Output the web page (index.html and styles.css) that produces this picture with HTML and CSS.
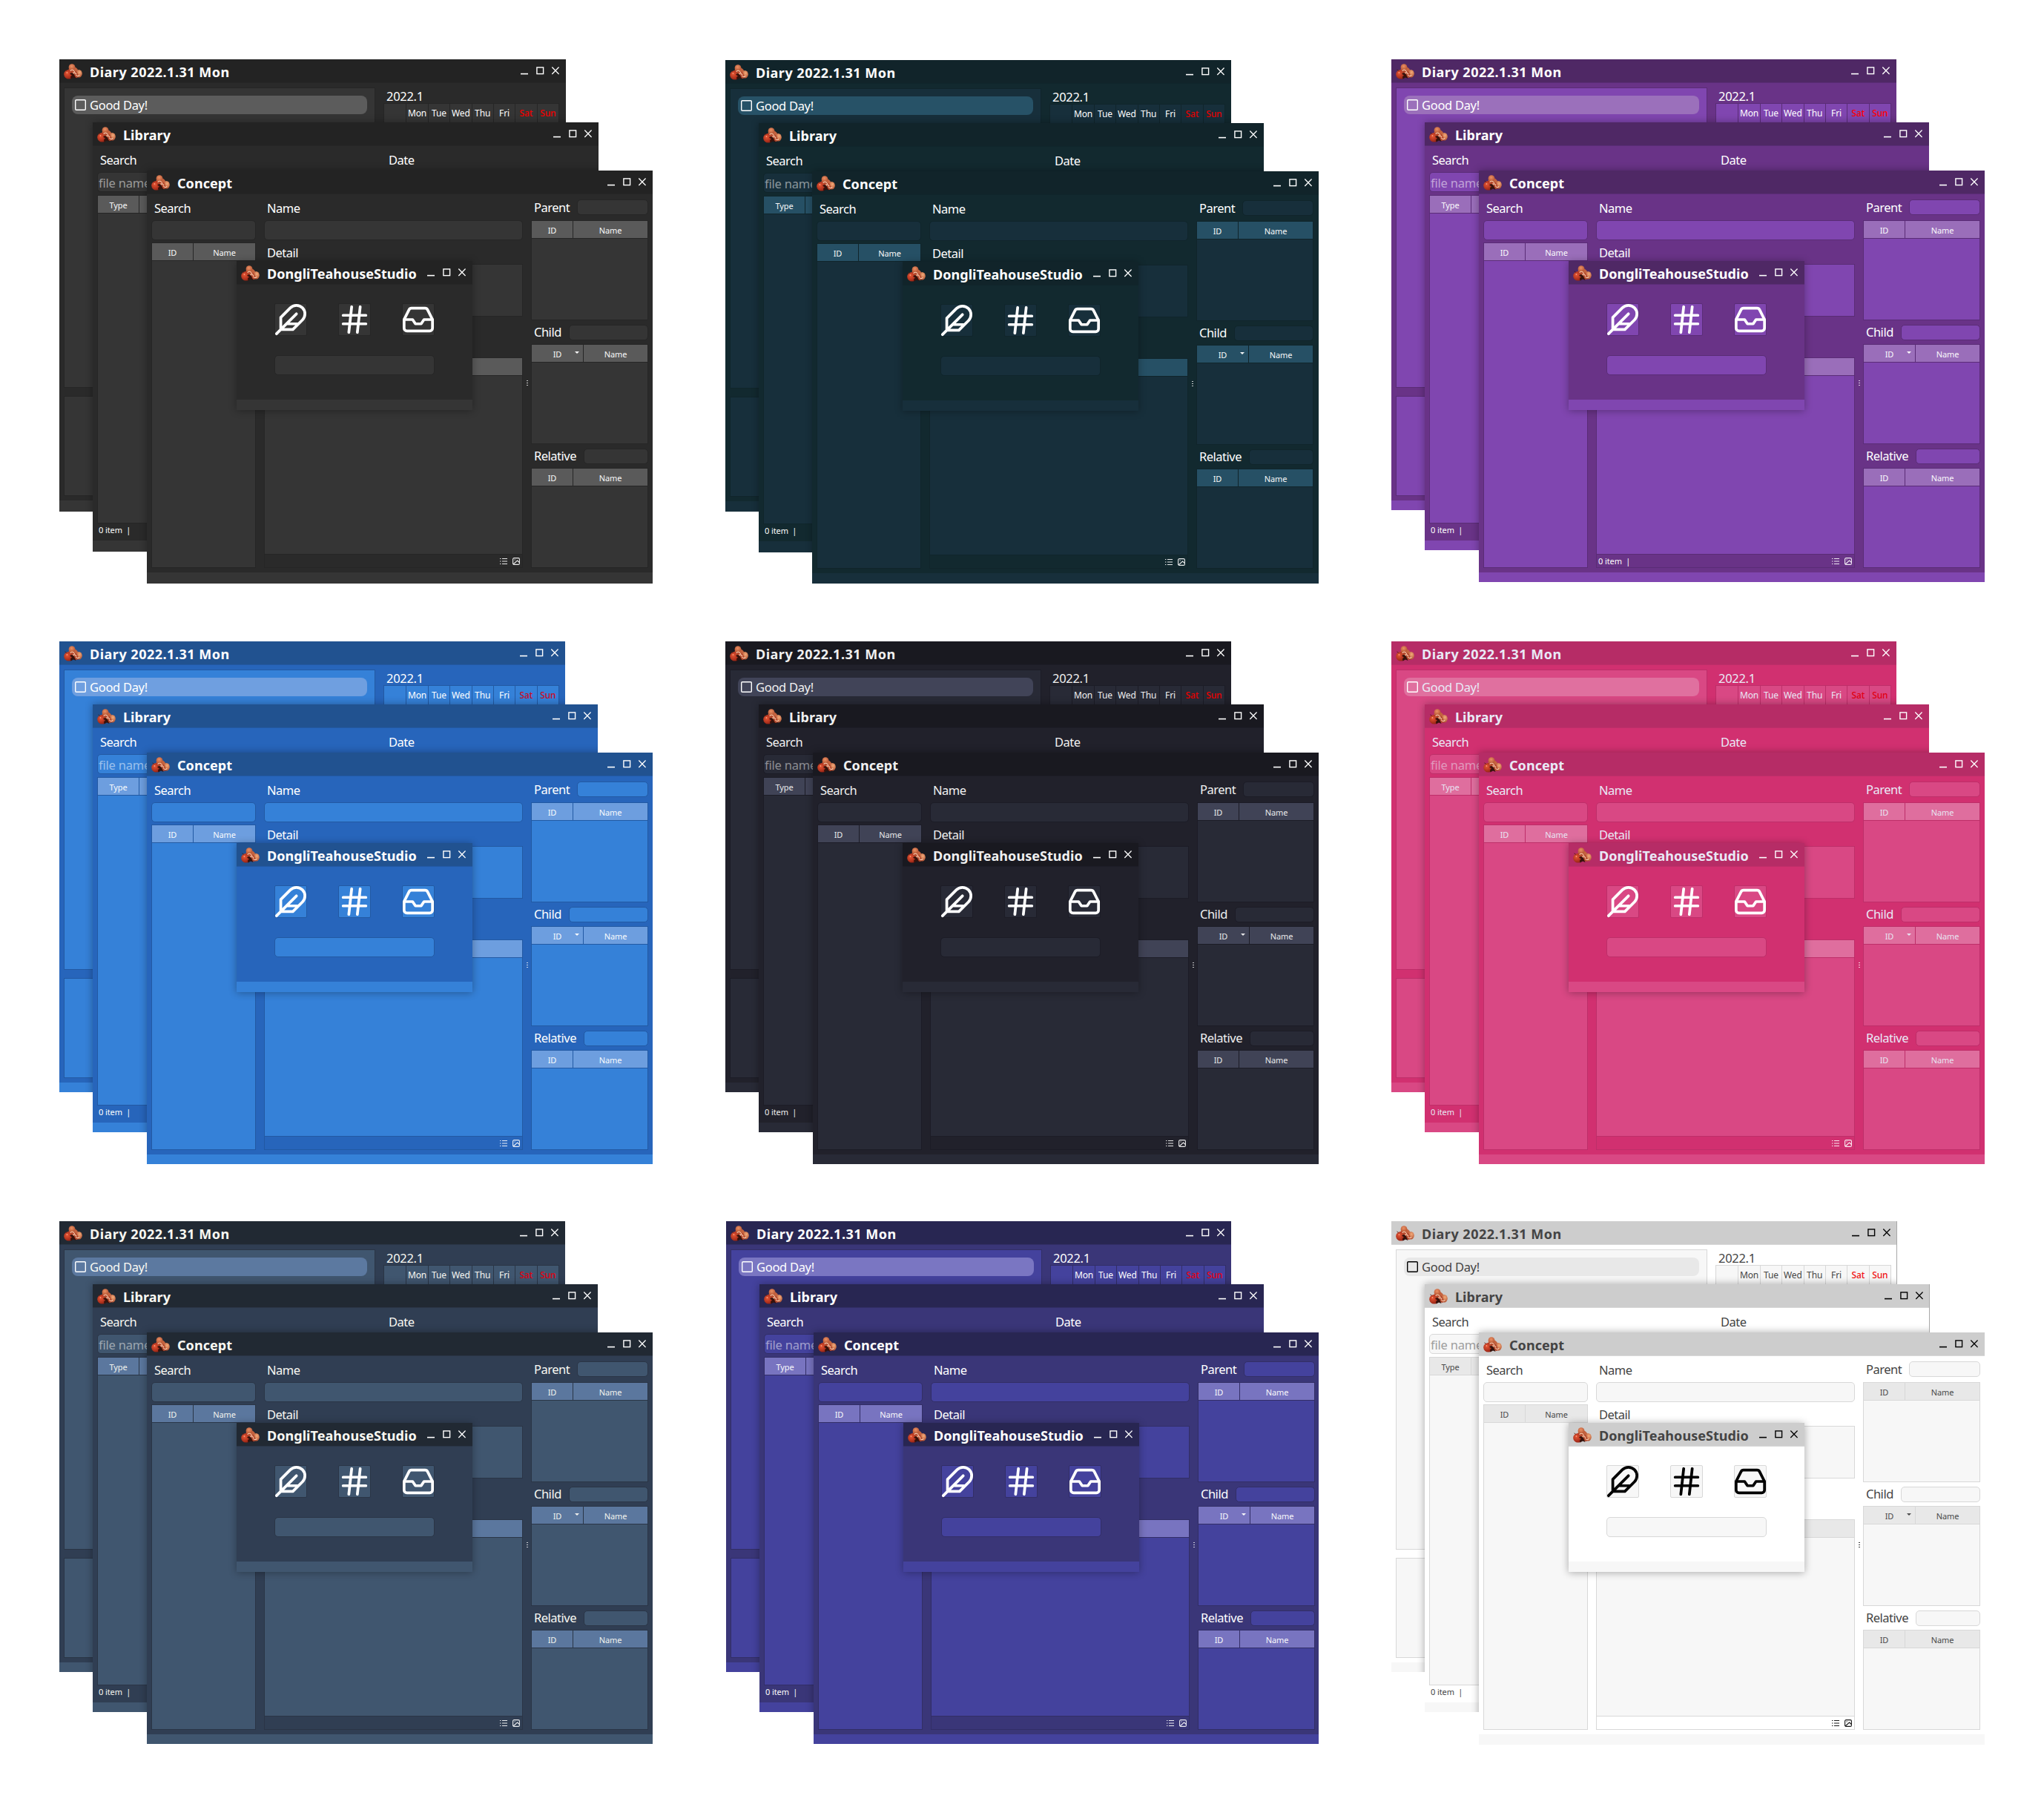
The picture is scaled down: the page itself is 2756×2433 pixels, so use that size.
FILE: index.html
```html
<!DOCTYPE html>
<html lang="en">
<head>
<meta charset="utf-8">
<title>DongliTeahouseStudio themes</title>
<link rel="stylesheet" href="styles.css">
</head>
<body>
<svg class="defs" aria-hidden="true">
  <defs>
    <radialGradient id="clay-top" cx=".45" cy=".35" r=".7"><stop offset="0" stop-color="#ea9064"/><stop offset="1" stop-color="#b04e2e"/></radialGradient>
    <radialGradient id="clay-left" cx=".35" cy=".4" r=".7"><stop offset="0" stop-color="#e65534"/><stop offset="1" stop-color="#8e1d10"/></radialGradient>
    <radialGradient id="clay-right" cx=".6" cy=".35" r=".7"><stop offset="0" stop-color="#f4ab7a"/><stop offset="1" stop-color="#ab4a2b"/></radialGradient>
    <symbol id="logo" viewBox="0 0 25 21">
      <path d="M6 10 7.500 4.500h7.500q4 1.500 4.500 5.500l-3 6H8z" fill="#c4633f"/>
      <circle cx="11" cy="4.700" r="4.400" fill="url(#clay-top)"/>
      <ellipse cx="20.400" cy="13.200" rx="4.400" ry="5.300" fill="url(#clay-right)"/>
      <ellipse cx="6.800" cy="14.200" rx="6.600" ry="6.300" fill="url(#clay-left)"/>
      <path d="M8 10 12 8l5.500 2.500 3 7-3 1.500-5-1.400z" fill="#b5492d"/>
      <path d="M10.500 12 13.500 13.500 16.500 20 13 18.500 9.500 20.500 9 17.500 11 15.500 8 13.500z" fill="#35120c"/>
      <path d="M9 9.300q2.500-2 4.500 0M14.300 10.200q.2 2.600 2.500 3.300M16.500 15q1.800 2.800 4.400.7M13 11.500l.4 1.500" fill="none" stroke="#f8cfb2" stroke-width="1.100" stroke-linecap="round"/>
      <path d="M1.500 7.800l2.200 1.600" stroke="#4a1a10" stroke-width=".8"/>
      <circle cx="4.400" cy="12" r=".9" fill="#f79a78"/>
    </symbol>
    <symbol id="feather" viewBox="0 0 24 24"><path d="M20.240 12.240a6 6 0 0 0-8.490-8.490L5 10.500V19h8.500zM16 8L2 22M17.500 15H9"/></symbol>
    <symbol id="hash" viewBox="0 0 24 24"><path d="M4 9h16M4 15h16M10 3L8 21M16 3l-2 18"/></symbol>
    <symbol id="inbox" viewBox="0 0 24 24"><path d="M22 12h-6l-2 3h-4l-2-3H2"/><path d="M5.450 5.110L2 12v6a2 2 0 0 0 2 2h16a2 2 0 0 0 2-2v-6l-3.450-6.890A2 2 0 0 0 16.760 4H7.240a2 2 0 0 0-1.790 1.110z"/></symbol>
  </defs>
</svg>

<template id="titlebar">
  <header class="titlebar">
    <svg class="logo"><use href="#logo"/></svg>
    <h2 class="title"></h2>
    <svg class="controls" viewBox="0 0 52 11">
      <path d="M0 9.600h10" class="bar"/>
      <rect x="21.900" y=".9" width="8.700" height="8.700"/>
      <path d="M42.300.5l9.300 9.500M51.600.5l-9.300 9.500" class="cross"/>
    </svg>
  </header>
</template>

<template id="scene">
  <section class="window diary" data-title="Diary 2022.1.31 Mon">
    <div class="body">
      <div class="todo">
        <div class="panel tasks"><div class="task"><span class="check"></span><span>Good Day!</span></div></div>
        <div class="panel notes"></div>
      </div>
      <div class="calendar">
        <div class="month">2022.1</div>
        <div class="days"><span></span><span>Mon</span><span>Tue</span><span>Wed</span><span>Thu</span><span>Fri</span><span class="off">Sat</span><span class="off">Sun</span></div>
      </div>
    </div>
    <div class="footer"></div>
    <div class="shade"></div>
  </section>

  <section class="window library" data-title="Library">
    <div class="body">
      <div class="filters"><div class="label">Search</div><div class="label">Date</div></div>
      <div class="field placeholder">file name</div>
      <div class="panel table"><div class="row"><span>Type</span><span></span></div></div>
      <div class="count">0 item&nbsp; |</div>
    </div>
    <div class="footer"></div>
    <div class="shade"></div>
  </section>

  <section class="window concept" data-title="Concept">
    <div class="body">
      <div class="col">
        <div class="label">Search</div>
        <div class="field"></div>
        <div class="panel table index"><div class="row"><span>ID</span><span>Name</span></div></div>
      </div>
      <div class="col">
        <div class="label">Name</div>
        <div class="field"></div>
        <div class="label detail-label">Detail</div>
        <div class="panel detail"></div>
        <div class="panel table files"><div class="row"><span></span></div></div>
        <div class="status">
          <span class="count"></span>
          <svg class="view" viewBox="0 0 10 10"><path d="M3 1.500h7M3 5h7M3 8.500h7M0 1.500h1.400M0 5h1.400M0 8.500h1.400"/></svg>
          <svg class="view" viewBox="0 0 10 10"><rect x=".6" y=".6" width="8.800" height="8.800" rx="1.500"/><path d="M1 9l5.500-5L9.400 6.500M2.500 3h1.300"/></svg>
        </div>
      </div>
      <div class="grip"><i></i><i></i><i></i></div>
      <div class="col links">
        <div class="pair"><span>Parent</span><div class="field"></div></div>
        <div class="panel table"><div class="row"><span>ID</span><span>Name</span></div></div>
        <div class="pair"><span>Child</span><div class="field"></div></div>
        <div class="panel table sorted"><div class="row"><span>ID</span><span>Name</span></div></div>
        <div class="pair"><span>Relative</span><div class="field"></div></div>
        <div class="panel table"><div class="row"><span>ID</span><span>Name</span></div></div>
      </div>
    </div>
    <div class="footer"></div>
  </section>

  <section class="window launcher" data-title="DongliTeahouseStudio">
    <div class="body">
      <div class="tools">
        <div class="tool"><svg><use href="#feather"/></svg></div>
        <div class="tool"><svg><use href="#hash"/></svg></div>
        <div class="tool"><svg><use href="#inbox"/></svg></div>
      </div>
      <div class="field"></div>
    </div>
    <div class="footer"></div>
  </section>
</template>

<main class="gallery">
  <div class="scene gray"></div>
  <div class="scene teal"></div>
  <div class="scene purple" data-count="0 item  |"></div>
  <div class="scene blue"></div>
  <div class="scene dark"></div>
  <div class="scene pink"></div>
  <div class="scene slate"></div>
  <div class="scene indigo"></div>
  <div class="scene light"></div>
</main>
<script src="scenes.js"></script>
</body>
</html>
```

FILE: scenes.js
```js
const scene = document.getElementById('scene').content;
const titlebar = document.getElementById('titlebar').content;

document.querySelectorAll('.scene').forEach((host) => {
  host.append(scene.cloneNode(true));
  host.querySelectorAll('.window').forEach((win) => {
    win.prepend(titlebar.cloneNode(true));
    win.querySelector('.title').textContent = win.dataset.title;
  });
  if (host.dataset.count) {
    host.querySelector('.status .count').textContent = host.dataset.count;
  }
});
```

FILE: styles.css
```css
* { box-sizing: border-box; }

body {
  margin: 0;
  background: #fff;
  font: 16.5px/1 "Noto Sans", "Open Sans", sans-serif;
  letter-spacing: -.5px;
}

.defs { position: absolute; width: 0; height: 0; }

.gallery {
  display: grid;
  grid-template-columns: 898px 898px 800px;
  grid-template-rows: 785px 782px 706px;
  height: 2433px;
  padding: 80px 0 0 80px;
}

/* Themes */
.scene {
  --text: #fff;
  --icon: #fff;
  --red: #f00000;
  --shadow: rgba(0, 0, 0, .32);
  --w-diary: 682px;
  --w-library: 681px;
  --h-diary: 608px;
  --h-library: 577px;
  --h-concept: 555px;
  position: relative;
  color: var(--text);
}
.gray   { --title: #232323; --bg: #2a2a2a; --panel: #353535; --head: #5c5c5c; --line: #262626; --w-diary: 683px; --w-library: 682px; --h-diary: 610px; --h-library: 579px; --h-concept: 557px; }
.teal   { --title: #11242a; --bg: #12292f; --panel: #172f3b; --head: #275267; --line: #10252b; --red: #e00000; --h-diary: 609px; --h-library: 579px; --h-concept: 556px; margin-top: 1px; }
.purple { --title: #4f2865; --bg: #693387; --panel: #8046b0; --head: #9b70bb; --line: #5a2c76; --red: #ff0000; --w-diary: 681px; --w-library: 680px; }
.blue   { --title: #215290; --bg: #2765bb; --panel: #3581d8; --head: #6f9fe0; --line: #2259a3; --red: #cc0a24; }
.dark   { --title: #191920; --bg: #21212b; --panel: #282a36; --head: #414458; --line: #1c1c26; --text: #f0f0f0; --red: #e80000; }
.pink   { --title: #b62c66; --bg: #d13070; --panel: #d94884; --head: #e0709f; --line: #be2e69; --text: #e9e9f6; --red: #e00010; --w-diary: 681px; --w-library: 680px; }
.slate  { --title: #212933; --bg: #303e53; --panel: #40566f; --head: #5c79a0; --line: #2a3546; --text: #f8f8f2; --red: #e00010; }
.indigo { --title: #282652; --bg: #3a3678; --panel: #44429d; --head: #7a76c2; --line: #322e66; --red: #e80010; --w-diary: 681px; --w-library: 680px; margin-left: 1px; }
.light  { --title: #cdcdcd; --bg: #fff; --panel: #f7f7f7; --head: #e8e8e8; --line: #d8d8d8; --text: #444; --icon: #000; --red: #f01010; --h-concept: 556px; }

/* Windows */
.window {
  position: absolute;
  display: flex;
  flex-direction: column;
  width: 682px;
  overflow: hidden;
  background: var(--bg);
}
.diary    { left: 0; top: 0; width: var(--w-diary); height: var(--h-diary); }
.library  { left: 45px; top: 85px; width: var(--w-library); height: var(--h-library); }
.concept  { left: 118px; top: 150px; height: var(--h-concept); }
.launcher { left: 239px; top: 272px; width: 318px; height: 201px; box-shadow: 0 1px 10px var(--shadow); }
.teal .concept { left: 117px; width: 683px; }
.indigo .concept { width: 681px; }
.light .diary, .light .library { border-right: 1px solid #a8a8a8; }

.shade { position: absolute; left: 45px; top: 85px; width: 682px; height: 700px; box-shadow: 0 0 10px var(--shadow); }
.library .shade { left: 73px; top: 65px; }

.titlebar {
  display: flex;
  flex: none;
  height: 32px;
  padding: 0 9px 0 6px;
  background: var(--title);
  border-bottom: 1px solid var(--line);
}
.light .diary .titlebar, .light .library .titlebar { padding-right: 8px; }
.logo { width: 25px; height: 21px; margin-top: 6px; }
.title { flex: 1; margin: 0 0 0 10px; font-size: 18px; font-weight: 700; letter-spacing: .05px; line-height: 34px; white-space: nowrap; }
.diary .title { letter-spacing: .5px; }
.controls { flex: none; width: 52px; height: 11px; margin-top: 10px; fill: none; stroke: var(--icon); stroke-width: 1.4; }
.controls .bar { stroke-width: 1.6; }
.controls .cross { stroke-width: 1.3; }

.body { flex: none; }
.footer { flex: 1; background: var(--panel); }

.panel { background: var(--panel); border: 1px solid var(--line); }
.field { height: 27px; border: 1px solid var(--line); border-radius: 5px; background: var(--panel); }
.label { height: 35px; padding-left: 4px; line-height: 38px; }

.table .row { display: flex; height: 24px; border-bottom: 1px solid var(--line); background: var(--head); font-size: 11px; letter-spacing: -.1px; line-height: 26px; text-align: center; opacity: .97; }
.table .row span { flex: 1; }
.table .row span:first-child:not(:last-child) { flex: none; width: 56px; border-right: 1px solid var(--line); }

/* Diary */
.diary .body { display: flex; height: 563px; padding: 6px 8px 6px 6px; }
.todo { display: flex; flex: none; flex-direction: column; width: 420px; gap: 11px; }
.tasks { height: 405px; padding: 10px; }
.notes { flex: 1; }
.task { display: flex; align-items: center; gap: 5px; height: 25px; padding-left: 4px; border-radius: 8px; background: var(--head); letter-spacing: -.3px; line-height: 24px; }
.check { width: 15px; height: 15px; margin-top: -1px; border-radius: 2px; box-shadow: inset 0 0 0 1.400px var(--icon); }
.calendar { flex: none; margin-left: 11px; }
.month { height: 21px; padding-left: 4px; letter-spacing: -.3px; line-height: 24px; }
.days { display: grid; grid-template-columns: repeat(8, 1fr); width: 237px; height: 60px; border: 1px solid var(--line); background: var(--panel); font-size: 12px; letter-spacing: -.1px; line-height: 26px; text-align: center; }
.days span + span { border-left: 1px solid var(--line); }
.days .off { color: var(--red); font-weight: 500; }

/* Library */
.library .body { height: 532px; padding: 0 6px; }
.filters { display: grid; grid-template-columns: 389px 1fr; }
.placeholder { padding-left: 1px; color: color-mix(in srgb, var(--text) 50%, var(--panel)); letter-spacing: -.2px; line-height: 27px; }
.library .table { height: 443px; margin-top: 4px; }
.count { padding-left: 2px; font-size: 11px; letter-spacing: -.1px; line-height: 17px; white-space: pre; }

/* Concept */
.concept .body { display: grid; grid-template-columns: 141px 349px 158px; gap: 11px; position: relative; height: 510px; padding: 0 6px 6px; }
.col { display: flex; flex-direction: column; }
.index { flex: 1; margin-top: 3px; }
.detail-label { height: 32px; line-height: 33px; }
.detail { height: 71px; margin-bottom: 55px; }
.files { flex: 1; }
.status { display: flex; align-items: center; gap: 7px; height: 18px; padding-right: 3px; border: 1px solid var(--line); border-top: 0; }
.status .count { flex: 1; line-height: 16px; }
.view { width: 10px; height: 10px; fill: none; stroke: var(--icon); stroke-width: 1.1; opacity: .9; }
.grip { position: absolute; left: 512px; top: 251px; display: grid; gap: 2px; }
.grip i { width: 2px; height: 1px; background: var(--icon); opacity: .75; }
.pair { display: flex; align-items: center; gap: 10px; flex: 0 0 32px; padding-left: 4px; }
.pair:first-child { flex-basis: 35px; }
.pair span { line-height: 22px; }
.pair:first-child span { line-height: 24px; }
.pair .field { flex: 1; height: 21px; }
.links .table { flex: 1; }
.sorted .row span:first-child:not(:last-child) { width: 70px; position: relative; }
.sorted .row span:first-child::after { content: ""; position: absolute; right: 5px; top: 9px; border: 3px solid transparent; border-top-color: var(--text); border-bottom: 0; }

/* Launcher */
.launcher .body { height: 155px; padding: 25px 51px 0; }
.tools { display: flex; justify-content: space-between; margin-bottom: 26px; }
.tool { display: grid; place-items: center; width: 44px; height: 44px; border: 1px solid var(--line); border-radius: 2px; background: var(--panel); }
.tool svg { width: 46px; height: 46px; margin: -2px; fill: none; stroke: var(--icon); stroke-width: 1.950; stroke-linecap: round; stroke-linejoin: round; }
```
